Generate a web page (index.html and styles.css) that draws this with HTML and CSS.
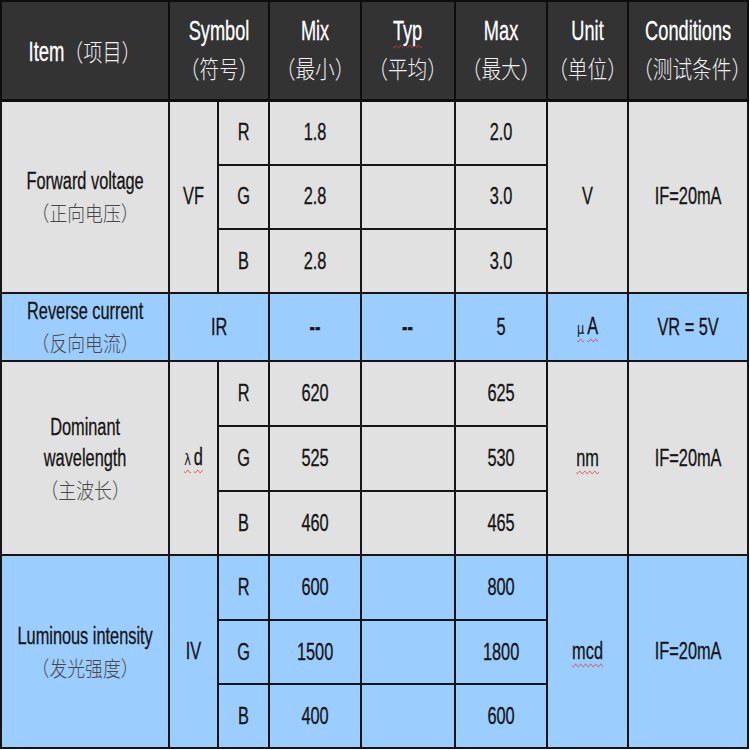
FILE: index.html
```html
<!DOCTYPE html>
<html lang="zh">
<head>
<meta charset="utf-8">
<title>LED Electrical-Optical Characteristics</title>
<link rel="stylesheet" href="styles.css">
</head>
<body>
<table class="spec">
  <colgroup>
    <col class="c-item"><col class="c-sym1"><col class="c-sym2"><col class="c-mix"><col class="c-typ"><col class="c-max"><col class="c-unit"><col class="c-cond">
  </colgroup>
  <thead>
    <tr class="head">
      <th><div class="h-item"><span class="h-item-en">Item</span><span class="h-item-zh">（项目）</span></div></th>
      <th colspan="2"><div class="h-en">Symbol</div><div class="h-zh">（符号）</div></th>
      <th><div class="h-en">Mix</div><div class="h-zh">（最小）</div></th>
      <th><div class="h-en"><span class="sp">Typ</span></div><div class="h-zh">（平均）</div></th>
      <th><div class="h-en">Max</div><div class="h-zh">（最大）</div></th>
      <th><div class="h-en">Unit</div><div class="h-zh">（单位）</div></th>
      <th><div class="h-en">Conditions</div><div class="h-zh h-cond">（测试条件）</div></th>
    </tr>
  </thead>
  <tbody class="grey">
    <tr class="r1">
      <td rowspan="3"><div class="en">Forward voltage</div><div class="zh">（正向电压）</div></td>
      <td rowspan="3"><div class="en">VF</div></td>
      <td><div class="en">R</div></td>
      <td><div class="en">1.8</div></td>
      <td></td>
      <td><div class="en">2.0</div></td>
      <td rowspan="3"><div class="en">V</div></td>
      <td rowspan="3"><div class="en">IF=20mA</div></td>
    </tr>
    <tr class="r2">
      <td><div class="en">G</div></td>
      <td><div class="en">2.8</div></td>
      <td></td>
      <td><div class="en">3.0</div></td>
    </tr>
    <tr class="r3">
      <td><div class="en">B</div></td>
      <td><div class="en">2.8</div></td>
      <td></td>
      <td><div class="en">3.0</div></td>
    </tr>
  </tbody>
  <tbody class="blue">
    <tr class="rev">
      <td><div class="en">Reverse current</div><div class="zh">（反向电流）</div></td>
      <td colspan="2"><div class="en">IR</div></td>
      <td><div class="en dash">--</div></td>
      <td><div class="en dash">--</div></td>
      <td><div class="en">5</div></td>
      <td><div class="en"><span class="sp"><span class="greek">μ</span>A</span></div></td>
      <td><div class="en">VR = 5V</div></td>
    </tr>
  </tbody>
  <tbody class="grey">
    <tr class="d1">
      <td rowspan="3"><div class="en">Dominant</div><div class="en">wavelength</div><div class="zh">（主波长）</div></td>
      <td rowspan="3"><div class="en"><span class="sp"><span class="greek">λ</span>d</span></div></td>
      <td><div class="en">R</div></td>
      <td><div class="en">620</div></td>
      <td></td>
      <td><div class="en">625</div></td>
      <td rowspan="3"><div class="en"><span class="sp">nm</span></div></td>
      <td rowspan="3"><div class="en">IF=20mA</div></td>
    </tr>
    <tr class="d2">
      <td><div class="en">G</div></td>
      <td><div class="en">525</div></td>
      <td></td>
      <td><div class="en">530</div></td>
    </tr>
    <tr class="d3">
      <td><div class="en">B</div></td>
      <td><div class="en">460</div></td>
      <td></td>
      <td><div class="en">465</div></td>
    </tr>
  </tbody>
  <tbody class="blue">
    <tr class="l1">
      <td rowspan="3"><div class="en">Luminous intensity</div><div class="zh">（发光强度）</div></td>
      <td rowspan="3"><div class="en">IV</div></td>
      <td><div class="en">R</div></td>
      <td><div class="en">600</div></td>
      <td></td>
      <td><div class="en">800</div></td>
      <td rowspan="3"><div class="en"><span class="sp">mcd</span></div></td>
      <td rowspan="3"><div class="en">IF=20mA</div></td>
    </tr>
    <tr class="l2">
      <td><div class="en">G</div></td>
      <td><div class="en">1500</div></td>
      <td></td>
      <td><div class="en">1800</div></td>
    </tr>
    <tr class="l3">
      <td><div class="en">B</div></td>
      <td><div class="en">400</div></td>
      <td></td>
      <td><div class="en">600</div></td>
    </tr>
  </tbody>
</table>
</body>
</html>
```
FILE: styles.css
```css
html, body {
  margin: 0;
  padding: 0;
  background: #ffffff;
}

.spec {
  border-collapse: collapse;
  table-layout: fixed;
  width: 749px;
  border: 2px solid #111;
  font-family: "Liberation Sans Narrow", "Liberation Sans", Arial, sans-serif;
}

.c-item { width: 168px; }
.c-sym1 { width: 49px; }
.c-sym2 { width: 51px; }
.c-mix  { width: 92px; }
.c-typ  { width: 93px; }
.c-max  { width: 92px; }
.c-unit { width: 81px; }
.c-cond { width: 120px; }

.spec th,
.spec td {
  border: 2px solid #151515;
  padding: 0;
  text-align: center;
  vertical-align: middle;
  white-space: nowrap;
  overflow: visible;
}

/* header */
.head { height: 99px; }
.head th {
  background: #333333;
  color: #ffffff;
  font-weight: normal;
  border-color: #0d0d0d;
  border-bottom: 3px solid #0d0d0d;
}
.h-en {
  display: flex;
  justify-content: center;
  font-size: 28px;
  line-height: 36px;
  transform: scaleX(0.65);
  -webkit-text-stroke: 0.3px #ffffff;
}
.h-zh {
  display: flex;
  justify-content: center;
  font-family: "Noto Sans CJK SC", sans-serif;
  font-weight: 300;
  font-size: 24px;
  line-height: 38px;
  transform: scaleX(0.82);
  color: #f0f0f0;
}
.h-cond {
  transform: translateX(4px) scaleX(0.82);
}
.h-item {
  line-height: 36px;
  padding-top: 6px;
}
.h-item-en {
  display: inline-block;
  font-size: 28px;
  transform: scaleX(0.66);
  transform-origin: right center;
  -webkit-text-stroke: 0.3px #ffffff;
}
.h-item-zh {
  display: inline-block;
  font-family: "Noto Sans CJK SC", sans-serif;
  font-weight: 300;
  font-size: 24px;
  color: #f0f0f0;
  transform: scaleX(0.8);
  transform-origin: left center;
}

/* body */
.grey td { background: #e1e1e1; }
.blue td { background: #9ccdff; }

.r1, .r2 { height: 64.5px; }
.r3 { height: 64px; }
.rev { height: 68px; }
.d1, .d2 { height: 65px; }
.d3 { height: 64px; }
.l1 { height: 65px; }
.l2, .l3 { height: 64px; }

.en {
  display: flex;
  justify-content: center;
  font-size: 23px;
  line-height: 31px;
  color: #141414;
  transform: scaleX(0.71);
  -webkit-text-stroke: 0.3px #141414;
}
.zh {
  display: flex;
  justify-content: center;
  font-family: "Noto Sans CJK SC", sans-serif;
  font-weight: 300;
  font-size: 21px;
  line-height: 31px;
  color: #484848;
  transform: scaleX(0.85);
}

.dash { font-weight: bold; }

.greek {
  font-family: "DejaVu Sans", sans-serif;
  font-size: 16px;
  margin-right: 4px;
  -webkit-text-stroke: 0;
}

.sp {
  text-decoration-line: underline;
  text-decoration-style: wavy;
  text-decoration-color: #d9303a;
  text-decoration-thickness: 1px;
  text-underline-offset: 4px;
}
```
